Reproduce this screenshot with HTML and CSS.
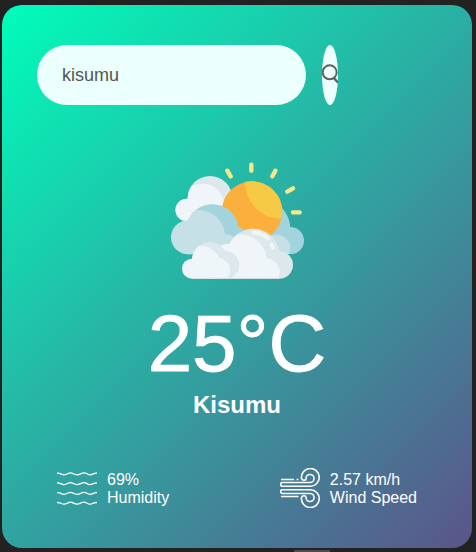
FILE: index.html
```html
<!DOCTYPE html>
<html lang="en">
<head>
<meta charset="utf-8">
<title>Weather</title>
<link rel="stylesheet" href="styles.css">
</head>
<body>
<main class="card">
  <div class="search">
    <input type="text" value="kisumu" spellcheck="false" aria-label="City">
    <button aria-label="Search">
      <svg width="16" height="20" viewBox="0 0 16 20" fill="none" stroke="#606060"><circle cx="7.7" cy="8.3" r="7" stroke-width="2"/><path d="M11.8 14l4.3 4.6" stroke-width="2.4"/></svg>
    </button>
  </div>
  <section class="weather">
    <svg class="weather-icon" viewBox="30 30 405 360">
      <defs>
        <clipPath id="sun"><circle cx="276" cy="185" r="91"/></clipPath>
        <clipPath id="back"><circle cx="150" cy="145" r="67"/></clipPath>
        <clipPath id="mid"><path d="M84 211A79 79 0 0 1 236 235V313H84Z"/></clipPath>
        <clipPath id="right"><path d="M280 175H367Q388 199 391 231A41 41 0 0 1 391 313H280Z"/></clipPath>
        <clipPath id="front"><path d="M201 386V310A79 79 0 0 1 358 304A41 41 0 0 1 358 386Z"/></clipPath>
        <clipPath id="small"><path d="M96 386V327A54 54 0 0 1 197 304A41 41 0 0 1 197 386Z"/></clipPath>
      </defs>
      <g stroke="#f8e88c" stroke-width="13" stroke-linecap="round"><path d="M202 62l10 17M274 44v18M346 62l-9 17M399 115l-17 10M399 187h20"/></g>
      <circle cx="80" cy="180" r="34" fill="#eff5f8"/>
      <circle cx="150" cy="145" r="67" fill="#dce8ec"/>
      <circle cx="127" cy="168" r="67" fill="#eff5f8" clip-path="url(#back)"/>
      <g clip-path="url(#right)"><path d="M280 170H440V320H280Z" fill="#a3d4dd"/><circle cx="350" cy="295" r="41" fill="#c5e1e7"/></g>
      <circle cx="276" cy="185" r="91" fill="#fbb03e"/>
      <circle cx="367" cy="95" r="112" fill="#f6ca45" clip-path="url(#sun)"/>
      <path d="M84 211A79 79 0 0 1 235 230Q258 234 260 270V313H84Z" fill="#a3d4dd"/>
      <circle cx="84" cy="262" r="51" fill="#c5e1e7"/>
      <g fill="#c5e1e7" clip-path="url(#mid)"><circle cx="116" cy="259" r="79"/><circle cx="196" cy="295" r="42"/><path d="M84 265H200V313H84Z"/></g>
      <path d="M201 386V310A79 79 0 0 1 358 304A41 41 0 0 1 358 386Z" fill="#dce8ec"/>
      <circle cx="201" cy="319" r="37" fill="#eff5f8"/>
      <g fill="#eff5f8" clip-path="url(#front)"><circle cx="241" cy="332" r="79"/><circle cx="317" cy="367" r="42"/></g>
      <path d="M281 248Q306 249 323 265M335 284l4 9" fill="none" stroke="#eff5f8" stroke-width="12" stroke-linecap="round"/>
      <path d="M96 386V327A54 54 0 0 1 197 304A41 41 0 0 1 197 386Z" fill="#dce8ec"/>
      <circle cx="96" cy="356" r="30" fill="#eff5f8"/>
      <g fill="#eff5f8" clip-path="url(#small)"><circle cx="125" cy="344" r="56"/><circle cx="172" cy="362" r="39"/><path d="M90 340H170V386H90Z"/></g>
      <path d="M97 385H360" stroke="#cbdde3" stroke-width="2"/>
    </svg>
    <h1>25°C</h1>
    <h2>Kisumu</h2>
  </section>
  <section class="details">
    <div class="detail">
      <svg width="40" height="40" viewBox="0 0 40 40" fill="none" stroke="#fff" stroke-width="1.3"><path id="wave" d="M0 5.2C3 4.5 4 6.8 7 6.8S11 4.8 13.5 4.8S17 6.8 20 6.8S24 4.8 27 4.8S30 6.8 33 6.8S37 4.5 40 5.2"/><use href="#wave" y="9.8"/><use href="#wave" y="19.5"/><use href="#wave" y="29.4"/></svg>
      <div><p>69%</p><p>Humidity</p></div>
    </div>
    <div class="detail">
      <svg width="40" height="40" viewBox="0 0 40 40" fill="none" stroke="#fff" stroke-width="1.6"><path d="M1 11.5H14M16.5 11.5H18.5M1 28.5H18.5"/><path d="M30 18.3H2.5A1.9 1.9 0 0 1 2.5 14.5H30A4 4 0 1 0 26 10.5Q26 12.3 24 12.3T21.5 10.5A8.9 8.9 0 1 1 30.4 18.3Z"/><path d="M30 21.7H2.5A1.9 1.9 0 0 0 2.5 25.5H30A4 4 0 1 1 26 29.5Q26 27.7 24 27.7T21.5 29.5A8.9 8.9 0 1 0 30.4 21.7Z"/></svg>
      <div><p>2.57 km/h</p><p>Wind Speed</p></div>
    </div>
  </section>
</main>
<div class="scroll-thumb"></div>
</body>
</html>
```
FILE: styles.css
```css
* {
  box-sizing: border-box;
  margin: 0;
  padding: 0;
  font-family: "Liberation Sans", Arial, sans-serif;
}
body {
  height: 552px;
  overflow: hidden;
  background: #222;
  padding: 5px 4px 0 2px;
}
.card {
  height: 543px;
  padding: 40px 35px;
  border-radius: 20px;
  background: linear-gradient(135deg, #00feba, #5b548a);
  color: #fff;
  text-align: center;
}
.search {
  display: flex;
  gap: 16px;
}
.search input {
  width: 269px;
  height: 60px;
  padding: 10px 25px;
  border: 0;
  outline: 0;
  border-radius: 30px;
  background: #ebfffc;
  color: #555;
  font-size: 18px;
}
.search button {
  display: flex;
  align-items: center;
  width: 16px;
  height: 60px;
  padding-bottom: 3px;
  border: 0;
  border-radius: 50%;
  background: #ebfffc;
}
.weather-icon {
  display: block;
  width: 135px;
  height: 120px;
  margin: 55px 0 0 133px;
}
.weather h1 {
  margin-top: 19px;
  font-size: 80px;
  font-weight: 500;
  line-height: 90px;
  -webkit-text-stroke: 0.8px #fff;
}
.weather h2 {
  margin-top: 2px;
  font-size: 24px;
  line-height: 28px;
}
.details {
  display: flex;
  justify-content: space-between;
  margin-top: 49px;
  padding: 0 20px;
}
.detail {
  display: flex;
  align-items: center;
  gap: 10px;
  text-align: left;
  font-size: 16px;
  line-height: 18px;
}
.detail div {
  padding-top: 2px;
}
.scroll-thumb {
  width: 36px;
  height: 2px;
  margin: 2px 0 0 292px;
  background: #4d4d4d;
}
```
